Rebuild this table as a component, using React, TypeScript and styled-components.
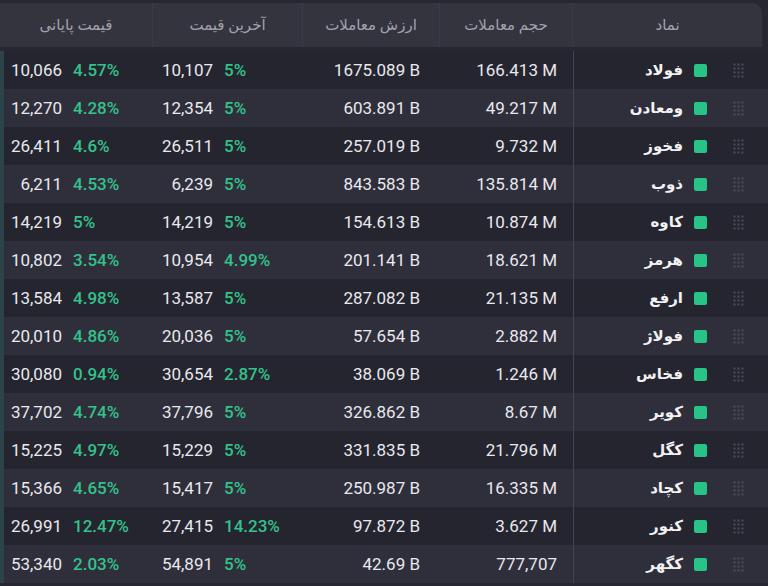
import * as React from 'react';
import styled, { createGlobalStyle } from 'styled-components';

const GREEN = '#33c28a';

type Row = {
    symbol: string;
    volume: string;
    value: string;
    last: string;
    lastPct: string;
    close: string;
    closePct: string;
};

const rows: Row[] = [
    { symbol: 'فولاد', volume: '166.413 M', value: '1675.089 B', last: '10,107', lastPct: '5%', close: '10,066', closePct: '4.57%' },
    { symbol: 'ومعادن', volume: '49.217 M', value: '603.891 B', last: '12,354', lastPct: '5%', close: '12,270', closePct: '4.28%' },
    { symbol: 'فخوز', volume: '9.732 M', value: '257.019 B', last: '26,511', lastPct: '5%', close: '26,411', closePct: '4.6%' },
    { symbol: 'ذوب', volume: '135.814 M', value: '843.583 B', last: '6,239', lastPct: '5%', close: '6,211', closePct: '4.53%' },
    { symbol: 'کاوه', volume: '10.874 M', value: '154.613 B', last: '14,219', lastPct: '5%', close: '14,219', closePct: '5%' },
    { symbol: 'هرمز', volume: '18.621 M', value: '201.141 B', last: '10,954', lastPct: '4.99%', close: '10,802', closePct: '3.54%' },
    { symbol: 'ارفع', volume: '21.135 M', value: '287.082 B', last: '13,587', lastPct: '5%', close: '13,584', closePct: '4.98%' },
    { symbol: 'فولاژ', volume: '2.882 M', value: '57.654 B', last: '20,036', lastPct: '5%', close: '20,010', closePct: '4.86%' },
    { symbol: 'فخاس', volume: '1.246 M', value: '38.069 B', last: '30,654', lastPct: '2.87%', close: '30,080', closePct: '0.94%' },
    { symbol: 'کویر', volume: '8.67 M', value: '326.862 B', last: '37,796', lastPct: '5%', close: '37,702', closePct: '4.74%' },
    { symbol: 'کگل', volume: '21.796 M', value: '331.835 B', last: '15,229', lastPct: '5%', close: '15,225', closePct: '4.97%' },
    { symbol: 'کچاد', volume: '16.335 M', value: '250.987 B', last: '15,417', lastPct: '5%', close: '15,366', closePct: '4.65%' },
    { symbol: 'کنور', volume: '3.627 M', value: '97.872 B', last: '27,415', lastPct: '14.23%', close: '26,991', closePct: '12.47%' },
    { symbol: 'کگهر', volume: '777,707', value: '42.69 B', last: '54,891', lastPct: '5%', close: '53,340', closePct: '2.03%' },
];

const DragHandle = () => (
    <svg width="11" height="15" viewBox="0 0 11 15">
        {[1.5, 5.5, 9.5].map((x) =>
            [1.5, 5.5, 9.5, 13.5].map((y) => (
                <rect key={`${x}-${y}`} x={x - 1} y={y - 1} width="2" height="2" fill="#4d4d5b" />
            ))
        )}
    </svg>
);

const App = () => {
    return (
        <Page>
            <GlobalStyle />
            <Table>
                <HeaderRow>
                    <HeadCell $span={2}>نماد</HeadCell>
                    <HeadCell $divider>حجم معاملات</HeadCell>
                    <HeadCell $divider>ارزش معاملات</HeadCell>
                    <HeadCell $divider>آخرین قیمت</HeadCell>
                    <HeadCell $divider>قیمت پایانی</HeadCell>
                </HeaderRow>
                <Body>
                    {rows.map((row, i) => (
                        <BodyRow key={row.symbol} $odd={i % 2 === 0}>
                            <DragCell>
                                <DragHandle />
                            </DragCell>
                            <SymbolCell>
                                <Marker />
                                <SymbolName>{row.symbol}</SymbolName>
                            </SymbolCell>
                            <AmountCell $pad={16}>{row.volume}</AmountCell>
                            <AmountCell $pad={20}>{row.value}</AmountCell>
                            <PriceCell $pad={8}>
                                <Price>{row.last}</Price>
                                <Change>{row.lastPct}</Change>
                            </PriceCell>
                            <PriceCell $pad={6}>
                                <Price>{row.close}</Price>
                                <Change>{row.closePct}</Change>
                            </PriceCell>
                        </BodyRow>
                    ))}
                </Body>
            </Table>
        </Page>
    );
};

const GlobalStyle = createGlobalStyle`
    html, body {
        margin: 0;
        padding: 0;
        background: #272731;
    }
    body {
        font-family: Roboto, "DejaVu Sans", sans-serif;
    }
`;

const Page = styled.div`
    width: 768px;
    height: 586px;
    overflow: hidden;
    background: #272731;
    padding-top: 3px;
    box-sizing: border-box;
`;

const Table = styled.div`
    direction: rtl;
    display: flex;
    flex-direction: column;
    gap: 4px;
`;

const HeaderRow = styled.div`
    display: grid;
    grid-template-columns: 42px 147px 133px 137px 150px 153px;
    height: 44px;
    margin-right: 6px;
    background: #34343f;
    border-radius: 0 10px 0 0;
`;

const HeadCell = styled.div<{ $span?: number; $divider?: boolean }>`
    grid-column: span ${({ $span }) => $span || 1};
    display: flex;
    align-items: center;
    justify-content: center;
    color: #a1a1ac;
    font-size: 15px;
    border-right: ${({ $divider }) => ($divider ? '1px solid #3a3a47' : '0')};
`;

const Body = styled.div`
    display: flex;
    flex-direction: column;
    border-left: 4px solid #2c4449;
`;

const BodyRow = styled.div<{ $odd: boolean }>`
    display: grid;
    grid-template-columns: 48px 147px 133px 137px 150px 149px;
    height: 38px;
    background: ${({ $odd }) => ($odd ? '#25252f' : '#2f2f3b')};
    color: #e8e8ee;
    font-size: 17px;
`;

const DragCell = styled.div`
    display: flex;
    align-items: center;
    padding-right: 24px;
`;

const SymbolCell = styled.div`
    display: flex;
    align-items: center;
    gap: 11px;
    padding-right: 13px;
    border-left: 1px solid #434351;
`;

const Marker = styled.span`
    width: 13px;
    height: 13px;
    border-radius: 2px;
    background: #27c387;
    flex-shrink: 0;
`;

const SymbolName = styled.span`
    font-size: 15px;
    font-weight: 600;
    color: #f2f2f5;
`;

const AmountCell = styled.div<{ $pad: number }>`
    display: flex;
    align-items: center;
    padding-right: ${({ $pad }) => $pad}px;
    unicode-bidi: plaintext;
`;

const PriceCell = styled.div<{ $pad: number }>`
    direction: ltr;
    display: flex;
    align-items: center;
    gap: 11px;
    padding-left: ${({ $pad }) => $pad}px;
`;

const Price = styled.span`
    min-width: 52px;
    text-align: right;
`;

const Change = styled.span`
    color: ${GREEN};
    font-weight: 500;
`;

export default App;
